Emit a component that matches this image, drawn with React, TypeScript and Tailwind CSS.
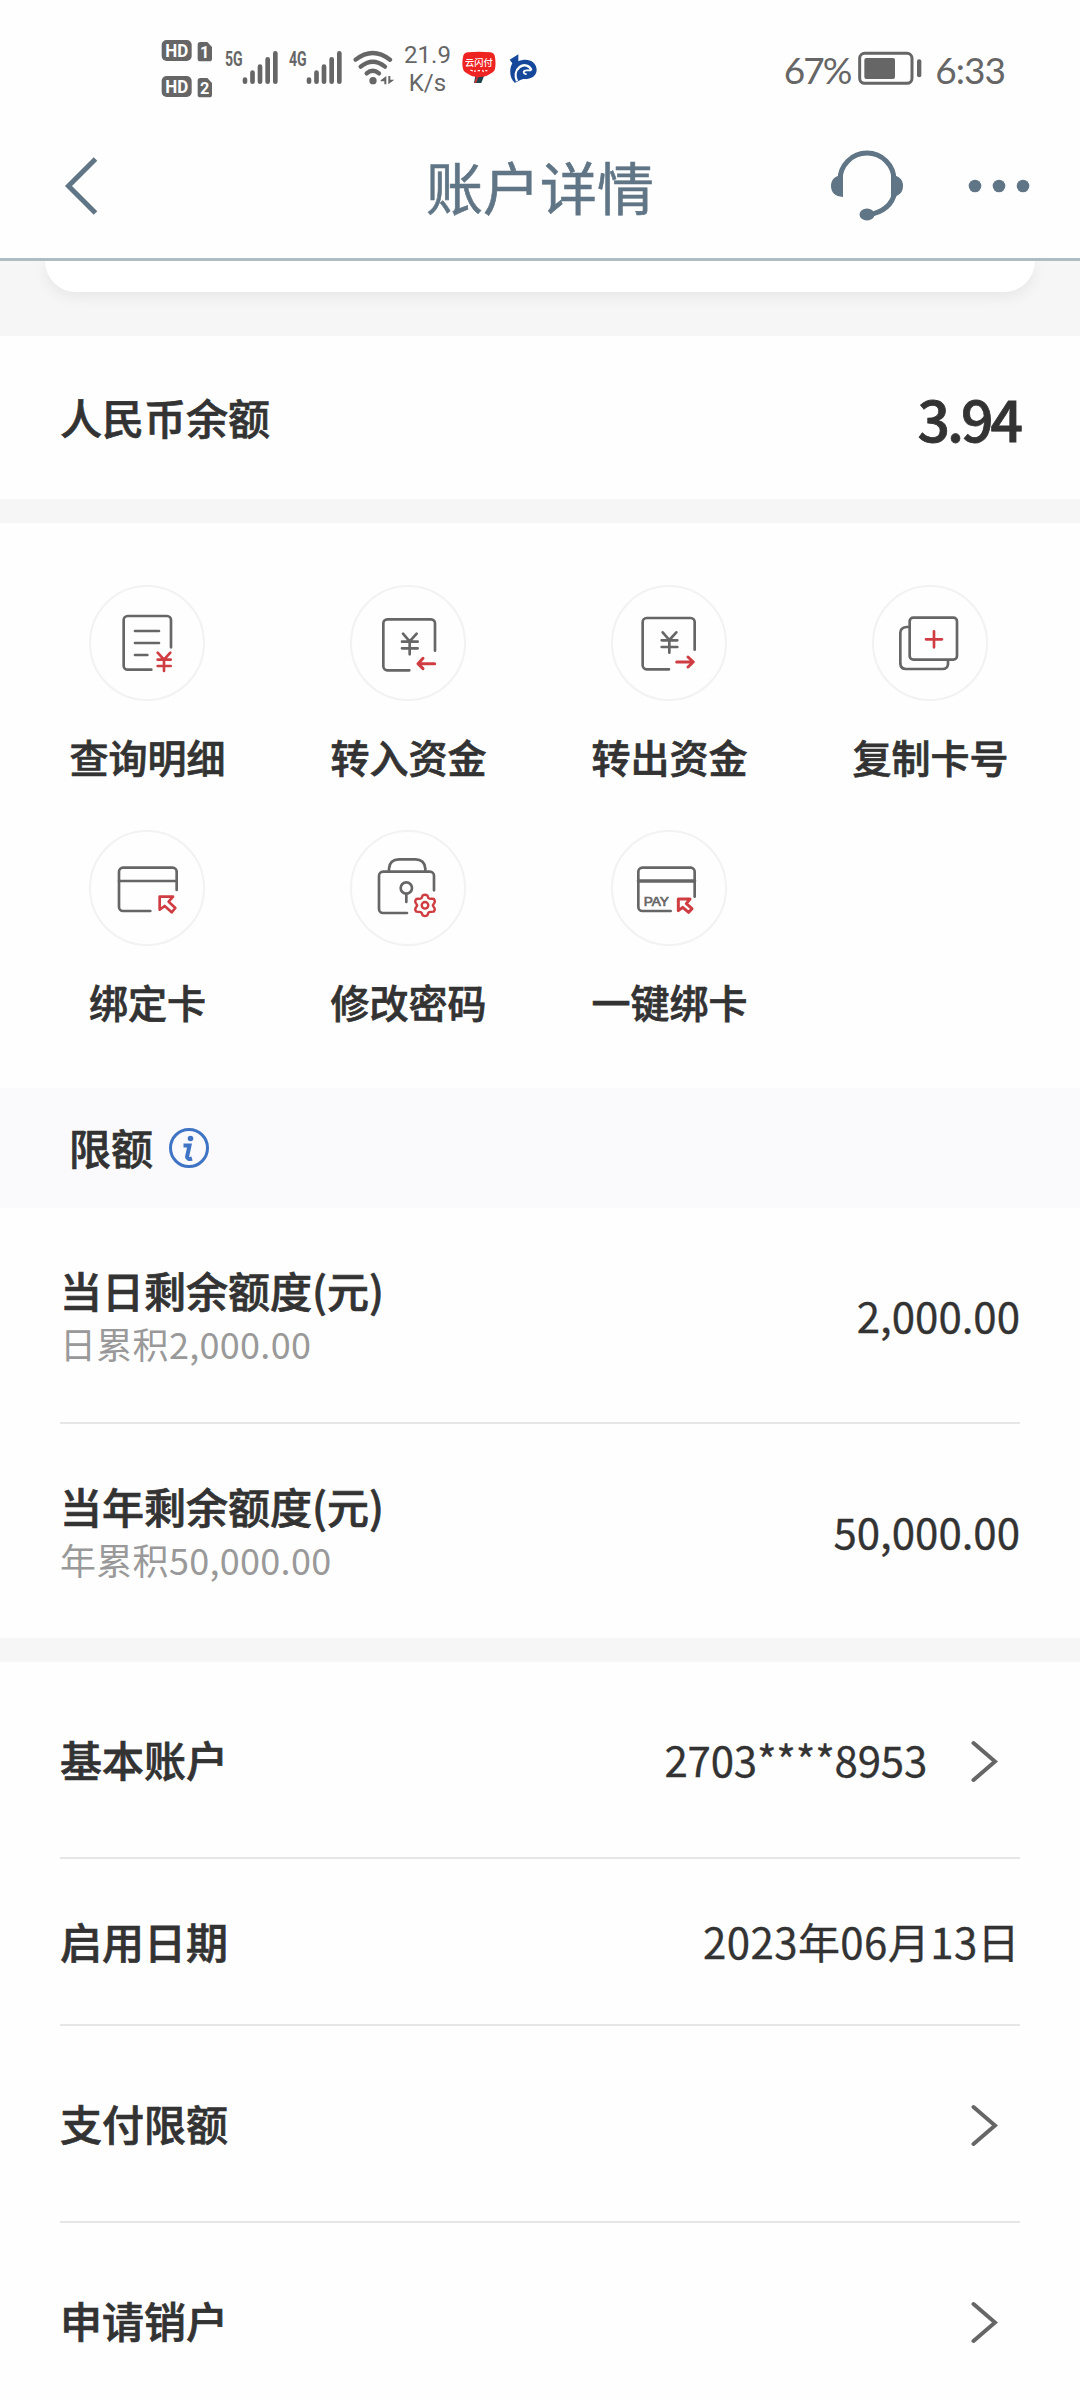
import type { ReactNode } from 'react';

const GRAY = '#666666';
const RED = '#cf3d42';
const SLATE = '#607585';

function SimBadges() {
  return (
    <svg className="h-[100px] w-[52px]" viewBox="64 0 156 300" fontFamily="Roboto, sans-serif" fontWeight="700" fill="#fff">
      {[60, 168].map((y, i) => (
        <g key={y}>
          <rect x="66" y={y} width="90" height="63" rx="15" fill={GRAY} />
          <text x="77" y={y + 51} fontSize="53" textLength="69" lengthAdjust="spacingAndGlyphs">
            HD
          </text>
          <path
            d={`M182 ${y + 6}H203L217 ${y + 21}V${y + 56}Q217 ${y + 64} 209 ${y + 64}H182Q174 ${y + 64} 174 ${y + 56}V${y + 14}Q174 ${y + 6} 182 ${y + 6}Z`}
            fill={GRAY}
          />
          <text x="195" y={y + 54} fontSize="49" textAnchor="middle">
            {i + 1}
          </text>
        </g>
      ))}
    </svg>
  );
}

function Signal({ label }: { label: string }) {
  return (
    <svg className="h-[100px] w-[54px]" viewBox="256 0 162 300">
      <text
        x="256"
        y="137"
        fontFamily="Roboto, sans-serif"
        fontWeight="700"
        fontSize="59"
        fill={GRAY}
        textLength="53"
        lengthAdjust="spacingAndGlyphs"
      >
        {label}
      </text>
      <g stroke={GRAY} strokeWidth="14" strokeLinecap="round">
        <path d="M316 179V185M338.500 158V185M361 140V185M384 118V185M407 100V185" />
      </g>
    </svg>
  );
}

function Wifi() {
  return (
    <svg className="h-[100px] w-[42px]" viewBox="638 0 126 300">
      <g fill="none" stroke={GRAY} strokeWidth="13" strokeLinecap="round">
        <path d="M646 119Q697 79 749 119" />
        <path d="M661 140Q697 110 734 140" />
        <path d="M679 160Q697 144 716 160" />
      </g>
      <circle cx="698" cy="182" r="11" fill={GRAY} />
      <path d="M721 181L738 168V193H732V184H721ZM744 168V193L762 179H750V168Z" fill={GRAY} />
    </svg>
  );
}

function UnionPay() {
  return (
    <svg className="h-[100px] w-[34px]" viewBox="965 0 102 300">
      <path d="M1005 168H1031L1023 189H1001Z" fill="#20444c" />
      <path d="M1008 170H1014L1008 189H1002Z" fill="#c2333b" />
      <path
        d="M982 97Q1016 94 1050 97Q1063 98 1064 112Q1067 130 1064 146Q1063 154 1055 158L1038 168Q1016 175 994 168L977 158Q969 154 968 146Q964 130 968 112Q969 98 982 97Z"
        fill="#ee2423"
      />
      <text
        x="974"
        y="138"
        fontSize="29"
        fontWeight="500"
        fontFamily='"Noto Sans CJK SC", sans-serif'
        fill="#fff"
        textLength="83"
        lengthAdjust="spacingAndGlyphs"
      >
        云闪付
      </text>
      <path d="M990 150L998 153M1004 151V156M1012 152H1019M1026 151L1030 155M1035 152H1041" stroke="#fff" strokeWidth="4" />
    </svg>
  );
}

function BankLogo() {
  return (
    <svg className="h-[100px] w-[28px]" viewBox="1107 0 84 300">
      <path
        d="M1109 119L1135 103V124C1162 112 1190 124 1190 150C1189 170 1172 178 1150 177C1140 178 1133 187 1124 188C1110 176 1106 150 1117 130Q1113 124 1109 119Z"
        fill="#15489a"
      />
      <path d="M1174 151C1170 136 1152 131 1139 141C1126 151 1124 168 1131 184" fill="none" stroke="#fff" strokeWidth="7" />
      <path d="M1174 151H1160Q1151 151 1151 157Q1152 163 1160 162" fill="none" stroke="#fff" strokeWidth="5" />
    </svg>
  );
}

function Battery() {
  return (
    <svg className="h-[100px] w-[64px]" viewBox="296 0 192 300">
      <rect x="301" y="100" width="157" height="90" rx="15" fill="none" stroke={GRAY} strokeWidth="9" />
      <rect x="315" y="114" width="92" height="63" rx="6" fill={GRAY} />
      <rect x="473" y="118" width="13" height="54" rx="6" fill={GRAY} />
    </svg>
  );
}

function StatusBar() {
  return (
    <div className="flex h-[120px] items-start justify-between pt-5 pr-[75px] pl-[161px] text-[#666]">
      <div className="flex">
        <SimBadges />
        <div className="ml-3">
          <Signal label="5G" />
        </div>
        <div className="ml-[10px]">
          <Signal label="4G" />
        </div>
        <div className="ml-[10px]">
          <Wifi />
        </div>
        <div className="ml-[8px] w-[49px] pt-[21px] text-center font-['Roboto',sans-serif] text-[24px] leading-[28px]">
          <div>21.9</div>
          <div>K/s</div>
        </div>
        <div className="ml-[10px]">
          <UnionPay />
        </div>
        <div className="ml-[13px]">
          <BankLogo />
        </div>
      </div>
      <div className="flex font-['Lato',sans-serif] text-[37px] leading-[99px]">
        <span className="tracking-[-2px]">67%</span>
        <div className="mr-[13px] ml-[8px]">
          <Battery />
        </div>
        <span className="tracking-[-1px]">6:33</span>
      </div>
    </div>
  );
}

function NavBar() {
  return (
    <header className="flex h-[141px] items-center justify-between border-b-[3px] border-[#afbcc4] pr-[50px] pb-[6px] pl-[62px]">
      <svg className="h-[64px] w-[36px]" viewBox="0 0 36 64" fill="none" stroke={SLATE} strokeWidth="5">
        <path d="M33.500 5L6.500 32L33.500 59" />
      </svg>
      <h1 className="ml-[152px] pb-[2px] text-[57px] leading-none text-[#607585] [-webkit-text-stroke:0.6px]">账户详情</h1>
      <div className="flex items-center gap-[64px]">
        <svg className="h-[76px] w-[74px]" viewBox="0 0 74 76">
          <g fill="none" stroke={SLATE} strokeWidth="5">
            <path d="M10 32A27 27 0 0 1 64 32" />
            <path d="M65 44Q61 63 38 67" />
          </g>
          <path d="M13 27V49Q1 48 1 38Q1 28 13 27ZM61 27V49Q73 48 73 38Q73 28 61 27Z" fill={SLATE} />
          <ellipse cx="37" cy="66.500" rx="7.500" ry="6" fill={SLATE} />
        </svg>
        <svg className="h-[14px] w-[62px]" viewBox="0 0 62 14" fill={SLATE}>
          <circle cx="7" cy="7" r="6.300" />
          <circle cx="31" cy="7" r="6.300" />
          <circle cx="55" cy="7" r="6.300" />
        </svg>
      </div>
    </header>
  );
}

const actions: { label: string; icon: ReactNode }[] = [
  {
    label: '查询明细',
    icon: (
      <>
        <path d="M187 254H116A12 12 0 0 1 104 242V105A12 12 0 0 1 116 93H234A12 12 0 0 1 246 105V187" />
        <path d="M138 138H210M138 174H210M138 210H175" />
        <path d="M206 203L225 224L244 203M225 224V258M206 224H245M206 243H245" stroke={RED} />
      </>
    ),
  },
  {
    label: '转入资金',
    icon: (
      <>
        <path d="M178 256H112A12 12 0 0 1 100 244V115A12 12 0 0 1 112 103H243A12 12 0 0 1 255 115V197" />
        <path d="M159 146L179 169L200 146M179 169V208M156 170H203M156 190H203" />
        <path d="M254 236H205M219 220L204 236L219 251" stroke={RED} strokeWidth="9" />
      </>
    ),
  },
  {
    label: '转出资金',
    icon: (
      <>
        <path d="M174 253H107A12 12 0 0 1 95 241V111A12 12 0 0 1 107 99H239A12 12 0 0 1 251 111V194" />
        <path d="M155 142L175 165L196 142M175 165V203M152 166H199M152 186H199" />
        <path d="M197 231H246M231 216L247 231L231 246" stroke={RED} strokeWidth="9" />
      </>
    ),
  },
  {
    label: '复制卡号',
    icon: (
      <>
        <rect x="113" y="98" width="142" height="126" rx="11" />
        <path d="M112 126H103Q85 128 85 144V236Q86 252 102 252H212Q226 252 228 238V227" />
        <path d="M162 163H210M186 139V187" stroke={RED} />
      </>
    ),
  },
  {
    label: '绑定卡',
    icon: (
      <>
        <path d="M184 243H102A12 12 0 0 1 90 231V125A12 12 0 0 1 102 113H251A12 12 0 0 1 263 125V180" />
        <path d="M90 153H263" />
        <path d="M212 200H252L239 215L259 234L248 247L227 228L212 239Z" stroke={RED} strokeWidth="8" />
      </>
    ),
  },
  {
    label: '修改密码',
    icon: (
      <>
        <path d="M171 249H99A12 12 0 0 1 87 237V137A12 12 0 0 1 99 125H240A12 12 0 0 1 252 137V181" />
        <path d="M117 124V116Q119 88 147 88H196Q224 88 226 116V124" />
        <circle cx="169" cy="174" r="17" />
        <path d="M169 192V216" />
        <g stroke={RED} strokeWidth="8" transform="translate(225 226) scale(0.9) translate(-225 -226)">
          <path d="M217 193Q225 188 233 193L236 201Q241 206 247 204L255 205Q260 213 256 218L251 226L256 235Q260 240 254 247L246 248Q239 247 236 251L233 259Q225 264 217 259L214 251Q210 247 203 248L196 247Q190 240 194 235L199 226L194 218Q190 212 196 205L203 204Q209 206 214 201Z" />
          <circle cx="225" cy="226" r="11" />
        </g>
      </>
    ),
  },
  {
    label: '一键绑卡',
    icon: (
      <>
        <path d="M179 243H94A12 12 0 0 1 82 231V125A12 12 0 0 1 94 113H239A12 12 0 0 1 251 125V200" />
        <path d="M82 153H251" strokeWidth="10" />
        <text
          x="98"
          y="227"
          fontFamily='"Liberation Sans", sans-serif'
          fontSize="40"
          fill={GRAY}
          strokeWidth="2"
          textLength="76"
          lengthAdjust="spacingAndGlyphs"
        >
          PAY
        </text>
        <path d="M202 207H237L226 221L243 236L233 247L215 232L202 242Z" stroke={RED} strokeWidth="9" />
      </>
    ),
  },
];

function ActionGrid() {
  return (
    <section className="grid h-[565px] grid-cols-4 content-start gap-y-[45px] bg-[#fefefe] pt-[62px] pr-5 pl-4">
      {actions.map(({ label, icon }) => (
        <div key={label} className="flex flex-col items-center">
          <div className="size-[116px] rounded-full border-2 border-[#f2f2f2]">
            <svg
              className="-m-[2px] size-[116px]"
              viewBox="0 0 348 348"
              fill="none"
              stroke={GRAY}
              strokeWidth="8"
              strokeLinecap="round"
              strokeLinejoin="round"
            >
              {icon}
            </svg>
          </div>
          <div className="mt-[27px] mb-px pl-[2px] text-[39px] leading-[56px] font-medium [-webkit-text-stroke:0.7px]">
            {label}
          </div>
        </div>
      ))}
    </section>
  );
}

function LimitRow({ title, note, value }: { title: string; note: string; value: string }) {
  return (
    <div className="flex h-[214px] items-center justify-between pb-[2px]">
      <div>
        <div className="text-[42px] leading-[58px] font-medium [-webkit-text-stroke:0.7px]">{title}</div>
        <div className="text-[36px] leading-[48px] tracking-[0.3px] text-[#999]">{note}</div>
      </div>
      <div className="text-[42px] [-webkit-text-stroke:0.3px]">{value}</div>
    </div>
  );
}

function Chevron() {
  return (
    <svg className="mt-[2px] mr-[22px] ml-[43px] h-[44px] w-[28px]" viewBox="0 0 28 44" fill="none" stroke={GRAY} strokeWidth="4" strokeLinecap="round">
      <path d="M3.500 4L25 22.500L3.500 41" />
    </svg>
  );
}

interface DetailRowProps {
  label: string;
  value?: string;
  link?: boolean;
}

function DetailRow({ label, value, link }: DetailRowProps) {
  return (
    <div className={`flex items-center justify-between ${link ? 'h-[195px]' : 'h-[165px]'}`}>
      <div className="pb-[3px] text-[42px] font-medium [-webkit-text-stroke:0.7px]">{label}</div>
      <div className="flex items-center">
        {value && (
          <span className={`pb-[2px] text-[42px] [-webkit-text-stroke:0.3px] ${link ? 'tracking-[-0.2px]' : 'tracking-[0.4px]'}`}>
            {value}
          </span>
        )}
        {link && <Chevron />}
      </div>
    </div>
  );
}

function Divider() {
  return <div className="h-[2px] bg-[#e6e6e6]" />;
}

export default function App() {
  return (
    <div className="h-[2400px] w-[1080px] overflow-hidden bg-[#fefefe] font-['Noto_Sans_CJK_SC',sans-serif] text-[#333]">
      <StatusBar />
      <NavBar />

      {/* Bottom edge of the card scrolled under the header */}
      <div className="h-[75px] overflow-hidden bg-[#f6f6f6] px-[45px]">
        <div className="h-[31px] rounded-b-[34px] bg-white shadow-[0_4px_16px_rgba(0,0,0,0.07)]" />
      </div>

      <section className="flex h-[163px] items-center justify-between px-[60px]">
        <div className="pb-[2px] text-[42px] font-medium [-webkit-text-stroke:0.7px]">人民币余额</div>
        <div className="text-[57px] font-medium tracking-[-3px] [-webkit-text-stroke:0.8px]">3.94</div>
      </section>
      <div className="h-6 bg-[#f6f6f6]" />

      <ActionGrid />

      <div className="flex h-[120px] items-center bg-[#fafafc] pl-[69px]">
        <span className="pb-[3px] text-[42px] font-medium [-webkit-text-stroke:0.7px]">限额</span>
        <svg className="ml-[15px] size-[42px]" viewBox="0 0 42 42" fill="none" stroke="#3f74c4">
          <circle cx="21" cy="21" r="18.500" strokeWidth="3" />
          <circle cx="22.500" cy="11.500" r="2.800" fill="#3f74c4" stroke="none" />
          <path d="M15.500 18.500H21.500L19 30Q19.500 33 24 31.500" strokeWidth="4" />
        </svg>
      </div>

      <section className="px-[60px]">
        <LimitRow title="当日剩余额度(元)" note="日累积2,000.00" value="2,000.00" />
        <Divider />
        <LimitRow title="当年剩余额度(元)" note="年累积50,000.00" value="50,000.00" />
      </section>
      <div className="h-6 bg-[#f6f6f6]" />

      <section className="px-[60px]">
        <DetailRow label="基本账户" value="2703****8953" link />
        <Divider />
        <DetailRow label="启用日期" value="2023年06月13日" />
        <Divider />
        <DetailRow label="支付限额" link />
        <Divider />
        <DetailRow label="申请销户" link />
      </section>
    </div>
  );
}
